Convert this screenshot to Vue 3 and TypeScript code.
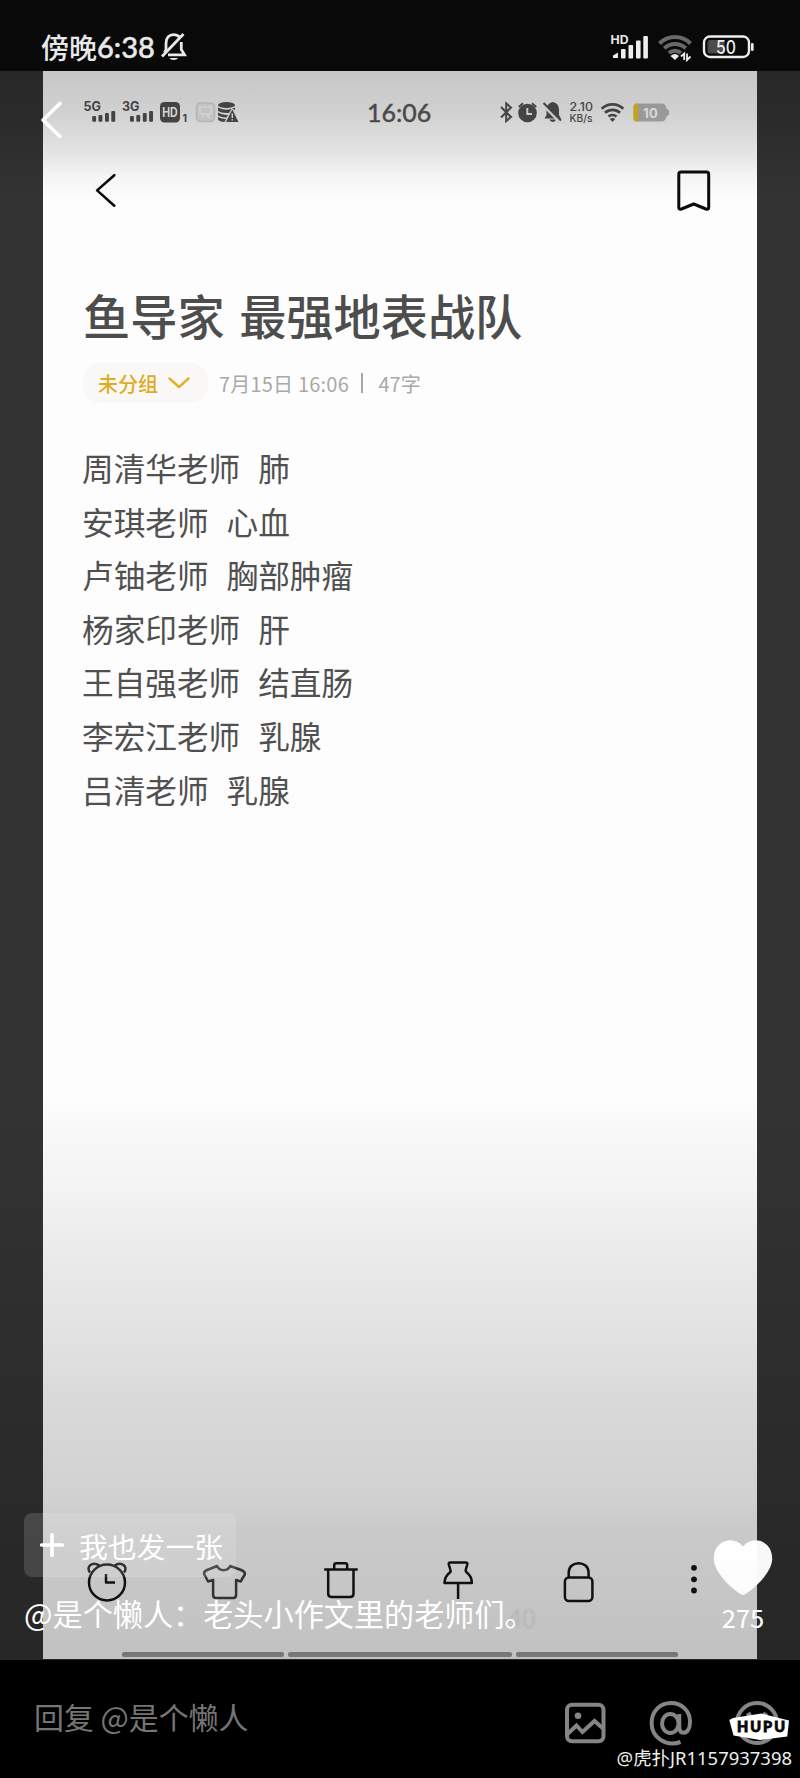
<script setup lang="ts">
interface Entry {
  teacher: string
  topic: string
}

const entries: Entry[] = [
  { teacher: '周清华老师', topic: '肺' },
  { teacher: '安琪老师', topic: '心血' },
  { teacher: '卢铀老师', topic: '胸部肿瘤' },
  { teacher: '杨家印老师', topic: '肝' },
  { teacher: '王自强老师', topic: '结直肠' },
  { teacher: '李宏江老师', topic: '乳腺' },
  { teacher: '吕清老师', topic: '乳腺' },
]
</script>

<template>
  <div class="screen">
    <header class="statusbar">
      <div class="clock">
        <span>傍晚</span><span class="num">6:38</span>
      </div>
      <svg class="bell" width="28" height="30" viewBox="159 32 28 30" fill="none" stroke="#e8e8e8" stroke-width="2.8">
        <path d="M164.500 52.500 L166 50 V43.500 C166 37.500 169.500 34.600 173.500 34.600 C176 34.600 178 35.500 179.300 37" />
        <path d="M181.300 42 V49.500 L184.500 54.800 H168" />
        <path d="M183.500 34 L162 56.500" />
        <path d="M169.500 58 H178 A4.500 3 0 0 1 169.500 58 Z" fill="#e8e8e8" stroke="none" />
      </svg>
      <svg class="status-right" width="150" height="34" viewBox="608 30 150 34">
        <text x="610.500" y="43.500" class="hd" textLength="18" lengthAdjust="spacingAndGlyphs">HD</text>
        <g fill="#eee">
          <path d="M613 58 V55.500 L618 52.500 V58 Z" />
          <rect x="621" y="49" width="4.600" height="9.500" rx="1" />
          <rect x="628.500" y="45" width="4.600" height="13.500" rx="1" />
          <rect x="636" y="40.500" width="4.600" height="18" rx="1" />
          <rect x="643.300" y="36" width="4.600" height="22.500" rx="1" />
        </g>
        <g fill="none" stroke="#696969" stroke-width="4">
          <path d="M659.500 43.500 A22 22 0 0 1 690.500 43.500" />
          <path d="M664.300 48.300 A15.500 15.500 0 0 1 685.700 48.300" />
          <path d="M669 53 A9 9 0 0 1 681 53" />
        </g>
        <path d="M670.500 56 Q675 52 679 56 L675 60 Z" fill="#eee" />
        <path d="M681 56.500 L684.200 53.500 V60 M687 53.500 V60 L690.500 56.500" fill="none" stroke="#eee" stroke-width="1.800" />
        <rect x="704" y="36.500" width="45" height="20.500" rx="6" fill="none" stroke="#eee" stroke-width="2.400" />
        <rect x="707.500" y="40" width="17" height="13.500" rx="2.500" fill="#4c4c4c" />
        <rect x="751" y="43" width="2.600" height="8" rx="1.300" fill="#eee" />
        <text x="726" y="53.500" class="level" textLength="20" lengthAdjust="spacingAndGlyphs">50</text>
      </svg>
    </header>

    <main class="viewer">
      <article class="paper">
        <div class="inner-status">
          <svg width="165" height="30" viewBox="80 97 165 30" fill="#444">
            <text x="83.500" y="110.500" class="net">5G</text>
            <g>
              <rect x="92.200" y="116" width="3.900" height="5.700" rx="1" />
              <rect x="98.500" y="115" width="3.900" height="6.700" rx="1" />
              <rect x="105" y="113" width="3.900" height="8.700" rx="1" />
              <rect x="111.300" y="111" width="3.900" height="10.700" rx="1" />
            </g>
            <text x="122" y="110.500" class="net">3G</text>
            <g transform="translate(37.800 0)">
              <rect x="92.200" y="116" width="3.900" height="5.700" rx="1" />
              <rect x="98.500" y="115" width="3.900" height="6.700" rx="1" />
              <rect x="105" y="113" width="3.900" height="8.700" rx="1" />
              <rect x="111.300" y="111" width="3.900" height="10.700" rx="1" />
            </g>
            <rect x="160" y="102" width="20" height="20.500" rx="4.500" />
            <text x="162.200" y="116.700" class="hd-badge" textLength="15.500" lengthAdjust="spacingAndGlyphs">HD</text>
            <text x="182.500" y="121.800" class="sim">1</text>
            <rect x="196.500" y="103" width="18" height="18.500" rx="4" fill="#c3c3c3" stroke="#b5b5b5" stroke-width="1.600" />
            <path d="M200 107 H211 V114 H200 Z M202 117 L204 114 M210 118 L206 114" fill="none" stroke="#d2d2d2" stroke-width="1.600" />
            <ellipse cx="226.500" cy="105" rx="8.500" ry="3" />
            <path d="M218 107.500 Q226.500 112 235 107.500 V110 L232 108.500 L229 113 Q222 113.500 218 111 Z" />
            <path d="M218 112.500 Q222 115.300 228 114.800 L226.500 117.500 Q221 117.300 218 115.500 Z" />
            <path d="M218 117 Q221 119 226 119 L224.500 122 Q219.500 121.500 218 119.800 Z" />
            <path d="M232.300 109.500 L238.500 122 H226 Z" />
            <path d="M232.300 113.500 V118 M232.300 119.300 V120.600" stroke="#d0d0d0" stroke-width="1.400" />
          </svg>
          <time class="inner-time">16:06</time>
          <svg width="180" height="30" viewBox="495 97 180 30" fill="#444">
            <path d="M501 107 L511 117 L506.200 121 V103.500 L511 107.500 L501 117.500" fill="none" stroke="#444" stroke-width="2" />
            <circle cx="527.500" cy="113" r="9.300" />
            <path d="M518.800 107 L523 103.300 M536.200 107 L532 103.300" stroke="#444" stroke-width="2" />
            <path d="M527.300 108 V114 H532" fill="none" stroke="#ccc" stroke-width="1.900" />
            <path d="M544.500 118.500 L546.500 115 V109 Q547 103.500 552.500 102 Q558.500 103 559 109 V115 L561 118.500 Z M549.500 119.500 H556 A3.300 3 0 0 1 549.500 119.500 Z" />
            <path d="M542 104 L560 122" stroke="#cecece" stroke-width="3" />
            <path d="M543.500 103 L561 120.500" stroke="#444" stroke-width="2" />
            <text x="569.500" y="111.300" class="rate" textLength="23.500" lengthAdjust="spacingAndGlyphs">2.10</text>
            <text x="569.500" y="121.800" class="rate small" textLength="23" lengthAdjust="spacingAndGlyphs">KB/s</text>
            <g fill="none" stroke="#444" stroke-width="2.700">
              <path d="M601.700 108.800 A15.500 15.500 0 0 1 623.300 108.800" />
              <path d="M605 112.800 A11 11 0 0 1 620 112.800" />
              <path d="M608.500 116.600 A6 6 0 0 1 616.500 116.600" />
            </g>
            <path d="M609.800 119 Q612.500 117 615.200 119 L612.500 122 Z" />
            <path d="M637 103.500 H661.500 Q665.500 103.500 666.500 108.500 L669 110.500 V114.500 L666.500 116.500 Q665.500 121.500 661.500 121.500 H637 Q633.500 121.500 633.500 118 V107 Q633.500 103.500 637 103.500 Z" fill="#999" />
            <path d="M638 103.500 H637 Q633.500 103.500 633.500 107 V118 Q633.500 121.500 637 121.500 H638 Z" fill="#c4a416" />
            <text x="650.500" y="117.500" class="batt">10</text>
          </svg>
        </div>

        <nav class="note-nav">
          <svg width="22" height="36" viewBox="95.700 172.800 22 36" fill="none" stroke="#0b0b0b" stroke-width="2.600" stroke-linecap="round" stroke-linejoin="round">
            <path d="M115 175 L97.800 190.200 L115 205.500" />
          </svg>
          <svg width="36" height="44" viewBox="676 169.300 36 44" fill="none" stroke="#0b0b0b" stroke-width="3" stroke-linejoin="round">
            <path d="M681 172.400 H706.500 Q708.700 172.400 708.700 174.600 V207.500 Q708.700 210.300 706 209.300 L693.700 204.300 L681.500 209.300 Q678.800 210.300 678.800 207.500 V174.600 Q678.800 172.400 681 172.400 Z" />
          </svg>
        </nav>

        <h1 class="title">鱼导家 最强地表战队</h1>

        <div class="meta">
          <span class="chip">
            <span>未分组</span>
            <svg width="22" height="12" viewBox="0 0 22 12" fill="none" stroke="#e0b030" stroke-width="2.400" stroke-linecap="round" stroke-linejoin="round">
              <path d="M1.500 1.500 L11 10 L20.500 1.500" />
            </svg>
          </span>
          <span class="date">7月15日 16:06</span>
          <i class="divider"></i>
          <span class="count">47字</span>
        </div>

        <ul class="entries">
          <li v-for="e in entries" :key="e.teacher">
            <span>{{ e.teacher }}</span><span>{{ e.topic }}</span>
          </li>
        </ul>

        <div class="tools">
          <svg width="50" height="50" viewBox="82 1556 50 50">
            <circle cx="107" cy="1582.500" r="18" />
            <path d="M90 1572.500 C85.500 1567 92 1561 99.500 1565.500 M124 1572.500 C128.500 1567 122 1561 114.500 1565.500" />
            <path d="M106 1574 V1582.500 H115" />
          </svg>
          <svg width="50" height="50" viewBox="199.400 1556 50 50" class="dim">
            <path d="M217.500 1566 C220 1571.500 228 1571.500 230.500 1566 L241.500 1570 Q246 1572 245.200 1574.500 L241 1581.500 L236.500 1580 V1595 Q236.500 1598 233.500 1598 H216.500 Q213.500 1598 213.500 1595 V1580 L208.500 1581.500 L204.500 1574 Q204 1571.500 207.500 1570 Z" />
          </svg>
          <svg width="50" height="50" viewBox="316.800 1556 50 50">
            <path d="M324 1569.500 H357.500 M334 1569 V1565.500 Q334 1563.300 336 1563.300 H345 Q347 1563.300 347 1565.500 V1569 M328 1570 V1593.500 Q328 1597 331.500 1597 H350 Q353.300 1597 353.300 1593.500 V1570" />
          </svg>
          <svg width="50" height="50" viewBox="434.200 1556 50 50">
            <path d="M450.500 1562.500 H466 Q468 1562.500 467.500 1564.500 L466 1569.500 Q465.500 1571.500 467.500 1573 Q472 1576.500 472 1583 H444.700 Q445 1576.500 449.500 1573 Q451.500 1571.500 450.500 1569.500 L449 1564.500 Q448.500 1562.500 450.500 1562.500 Z M458.300 1583 V1599" />
          </svg>
          <svg width="50" height="50" viewBox="551.600 1556 50 50">
            <rect x="564.500" y="1577.500" width="27.500" height="23.500" rx="4" />
            <path d="M568.300 1577.500 V1572.500 C568.300 1560 588.200 1560 588.200 1572.500 V1577.500" />
          </svg>
          <svg width="50" height="50" viewBox="669 1556 50 50" class="solid">
            <circle cx="694" cy="1567.800" r="2.900" />
            <circle cx="694" cy="1579.300" r="2.900" />
            <circle cx="694" cy="1590.500" r="2.900" />
          </svg>
        </div>

        <div class="segments"><i class="side"></i><i class="mid"></i><i class="side"></i></div>
        <span class="ghost">40</span>
      </article>

      <svg class="leave" width="26" height="42" viewBox="38 98 26 42" fill="none" stroke="#fff" stroke-width="3.600" stroke-linecap="round" stroke-linejoin="round">
        <path d="M60 103.500 L43 120 L60 136.500" />
      </svg>

      <button class="also" type="button">
        <svg width="24" height="24" viewBox="0 0 24 24" stroke="#fff" stroke-width="3.600" stroke-linecap="round">
          <path d="M12 1.700 V22.300 M1.700 12 H22.300" />
        </svg>
        <span>我也发一张</span>
      </button>

      <p class="caption">@是个懒人：老头小作文里的老师们。</p>

      <div class="like">
        <svg width="60" height="56" viewBox="713 1540 60 56">
          <path d="M743 1595 C740 1595 713.800 1575.500 713.800 1558.500 C713.800 1540 734 1535 743 1546.500 C752 1535 772.200 1540 772.200 1558.500 C772.200 1575.500 746 1595 743 1595 Z" fill="#fff" fill-opacity=".97" />
        </svg>
        <span>275</span>
      </div>
    </main>

    <footer class="composer">
      <span class="reply">回复 @是个懒人</span>
      <div class="actions">
        <svg width="44" height="48" viewBox="563 1699 44 48">
          <rect x="567" y="1704.800" width="36.500" height="36.500" rx="5" />
          <circle cx="578" cy="1715.700" r="3.300" class="dot" />
          <path d="M567.500 1734 L576.500 1725.500 L582.500 1732 L594.500 1721 L603 1728.500" />
        </svg>
        <svg width="44" height="48" viewBox="649 1699 44 48">
          <path d="M680.500 1742 C666 1747 651.600 1737.500 651.600 1723 C651.600 1711.500 660 1703 671 1703 C682 1703 690 1711 690 1721.500 C690 1728.500 687.500 1732.700 683.500 1732.700 C680 1732.700 679.300 1730 679.300 1727 V1714" />
          <ellipse cx="670.300" cy="1723.500" rx="8.300" ry="9.500" />
        </svg>
        <svg width="64" height="48" viewBox="728 1699 64 48">
          <circle cx="757" cy="1723" r="20" />
          <path d="M747 1716 L751 1713.500 M763 1713.500 L767 1716" />
          <path d="M729.300 1720 L733 1718 L761.500 1713.500 L789 1720.500 L787.300 1736.500 L760 1740 L733.500 1735.500 Z" class="plate" />
          <text x="737" y="1732.300" class="brand" textLength="48" lengthAdjust="spacing">HUPU</text>
        </svg>
      </div>
      <span class="watermark">@虎扑JR1157937398</span>
    </footer>
  </div>
</template>

<style>
html,
body {
  margin: 0;
  background: #000;
}
</style>

<style scoped>
.screen {
  --shade: linear-gradient(
    180deg,
    rgba(0, 0, 0, 0.215) 0,
    rgba(0, 0, 0, 0.175) 41px,
    rgba(0, 0, 0, 0.105) 79px,
    rgba(0, 0, 0, 0.035) 105px,
    rgba(0, 0, 0, 0) 130px,
    rgba(0, 0, 0, 0) 1025px,
    rgba(0, 0, 0, 0.02) 1062px,
    rgba(0, 0, 0, 0.035) 1109px,
    rgba(0, 0, 0, 0.075) 1185px,
    rgba(0, 0, 0, 0.115) 1279px,
    rgba(0, 0, 0, 0.14) 1329px,
    rgba(0, 0, 0, 0.175) 1429px,
    rgba(0, 0, 0, 0.205) 1460px,
    rgba(0, 0, 0, 0.235) 1589px
  );
  display: flex;
  flex-direction: column;
  width: 800px;
  height: 1778px;
  overflow: hidden;
  background: #000;
  font-family: 'Noto Sans CJK SC', sans-serif;
}
svg {
  display: block;
  flex: none;
}
.statusbar {
  display: flex;
  align-items: center;
  box-sizing: border-box;
  height: 71px;
  padding: 22px 42px 0 41px;
  background: #090909;
  color: #e8e8e8;
}
.clock {
  display: flex;
  align-items: center;
  width: 118px;
  font-size: 28px;
  line-height: 34px;
  font-weight: 500;
  white-space: nowrap;
}
.num {
  font-family: Lato, sans-serif;
  font-size: 29px;
  -webkit-text-stroke: 0.500px #e8e8e8;
}
.status-right {
  margin-left: auto;
}
text {
  font-family: Inter, sans-serif;
}
.hd {
  font-size: 11.500px;
  font-weight: 700;
  fill: #e8e8e8;
}
.level {
  font-size: 18.500px;
  font-weight: 500;
  text-anchor: middle;
  fill: #eee;
}
.viewer {
  position: relative;
  box-sizing: border-box;
  height: 1589px;
  padding: 0 43px;
  background: var(--shade), #333;
}
.paper {
  position: relative;
  display: flex;
  flex-direction: column;
  height: 1588px;
  background: var(--shade), #fdfdfd;
}
.inner-status {
  display: flex;
  align-items: center;
  height: 82px;
  padding-left: 37px;
}
.net {
  font-size: 12.500px;
  font-weight: 700;
}
.hd-badge {
  font-size: 12.500px;
  font-weight: 700;
  fill: #d6d6d6;
}
.sim {
  font-size: 10.500px;
  font-weight: 700;
}
.inner-time {
  box-sizing: border-box;
  width: 250px;
  padding-left: 122px;
  font-family: Lato, sans-serif;
  font-size: 25px;
  font-weight: 500;
  line-height: 30px;
  color: #4a4a4a;
  -webkit-text-stroke: 0.300px #4a4a4a;
}
.rate {
  font-size: 11.500px;
  font-weight: 500;
}
.rate.small {
  font-size: 10.500px;
}
.batt {
  font-size: 13.500px;
  font-weight: 700;
  text-anchor: middle;
  fill: #d8d8d8;
}
.note-nav {
  display: flex;
  align-items: center;
  justify-content: space-between;
  height: 76px;
  padding: 0 45px 0 52px;
}
.title {
  margin: 52px 0 0 40px;
  font-size: 47.200px;
  line-height: 68px;
  font-weight: 500;
  word-spacing: 4px;
  color: #4d4d4d;
  white-space: nowrap;
}
.meta {
  display: flex;
  align-items: center;
  height: 42px;
  margin: 13px 0 0 40px;
  font-size: 20px;
  color: #a9a9a9;
  white-space: nowrap;
}
.chip {
  display: flex;
  align-items: center;
  gap: 10px;
  box-sizing: border-box;
  width: 125px;
  height: 40px;
  padding-left: 15px;
  border-radius: 18px;
  background: #f9f8f7;
  color: #dfab20;
  font-weight: 500;
}
.date {
  width: 142px;
  margin-left: 11px;
  letter-spacing: 0.200px;
}
.divider {
  width: 1.500px;
  height: 20px;
  margin-right: 16px;
  background: #a9a9a9;
}
.entries {
  margin: 37px 0 0;
  padding: 0 0 0 39px;
  list-style: none;
  font-size: 31.650px;
  line-height: 53.500px;
  color: #505050;
}
.entries li {
  display: flex;
  gap: 18px;
  height: 53.600px;
}
.tools {
  display: grid;
  grid-template-columns: repeat(6, 117.400px);
  justify-items: center;
  margin: auto 0 46px 5.300px;
}
.tools svg {
  fill: none;
  stroke: #101010;
  stroke-width: 2.500px;
  stroke-linejoin: round;
}
.tools svg.dim {
  stroke: #333;
}
.tools svg.solid {
  fill: #101010;
  stroke: none;
}
.segments {
  display: flex;
  gap: 4px;
  height: 5px;
  margin: 0 0 2px 79px;
}
.segments i {
  border-radius: 2px;
  background: #777;
}
.side {
  width: 162px;
}
.mid {
  width: 224px;
}
.ghost {
  position: absolute;
  left: 465px;
  top: 1527px;
  font-size: 26px;
  font-weight: 300;
  line-height: 38px;
  color: #b0b0b0;
  filter: blur(1px);
}
.leave {
  position: absolute;
  left: 38px;
  top: 27px;
}
.also {
  position: absolute;
  left: 24px;
  top: 1442px;
  display: flex;
  align-items: center;
  gap: 15px;
  width: 212px;
  height: 64px;
  padding: 0 0 0 16px;
  border: 0;
  border-radius: 8px;
  background: rgba(255, 255, 255, 0.14);
  color: #fff;
  font-family: inherit;
  font-size: 28.800px;
  white-space: nowrap;
}
.caption {
  position: absolute;
  left: 24px;
  top: 1522px;
  margin: 0;
  font-size: 30.150px;
  line-height: 40px;
  color: #fff;
  white-space: nowrap;
}
.like {
  position: absolute;
  left: 713px;
  top: 1469px;
  display: flex;
  flex-direction: column;
  align-items: center;
  width: 60px;
  color: #fff;
  font-size: 25.500px;
  line-height: 41px;
}
.composer {
  position: relative;
  display: flex;
  align-items: flex-start;
  justify-content: space-between;
  box-sizing: border-box;
  height: 118px;
  padding: 36px 8px 0 34px;
  background: #000;
}
.reply {
  font-size: 29.900px;
  line-height: 40px;
  color: #757575;
  white-space: nowrap;
}
.actions {
  display: flex;
  gap: 42px;
  padding-top: 3px;
  fill: none;
  stroke: #858585;
  stroke-width: 4px;
}
.actions svg:last-child {
  margin-left: -7px;
}
.dot {
  fill: #858585;
  stroke: none;
}
.plate {
  fill: #fff;
  stroke: none;
}
.brand {
  font-family: Lato, sans-serif;
  font-size: 14.500px;
  font-weight: 900;
  fill: #050505;
  stroke: #050505;
  stroke-width: 0.800px;
}
.watermark {
  position: absolute;
  right: 8px;
  top: 84px;
  font-family: 'Noto Sans', 'Noto Sans CJK SC', sans-serif;
  font-size: 18.450px;
  line-height: 28px;
  color: #eee;
  white-space: nowrap;
}
</style>
